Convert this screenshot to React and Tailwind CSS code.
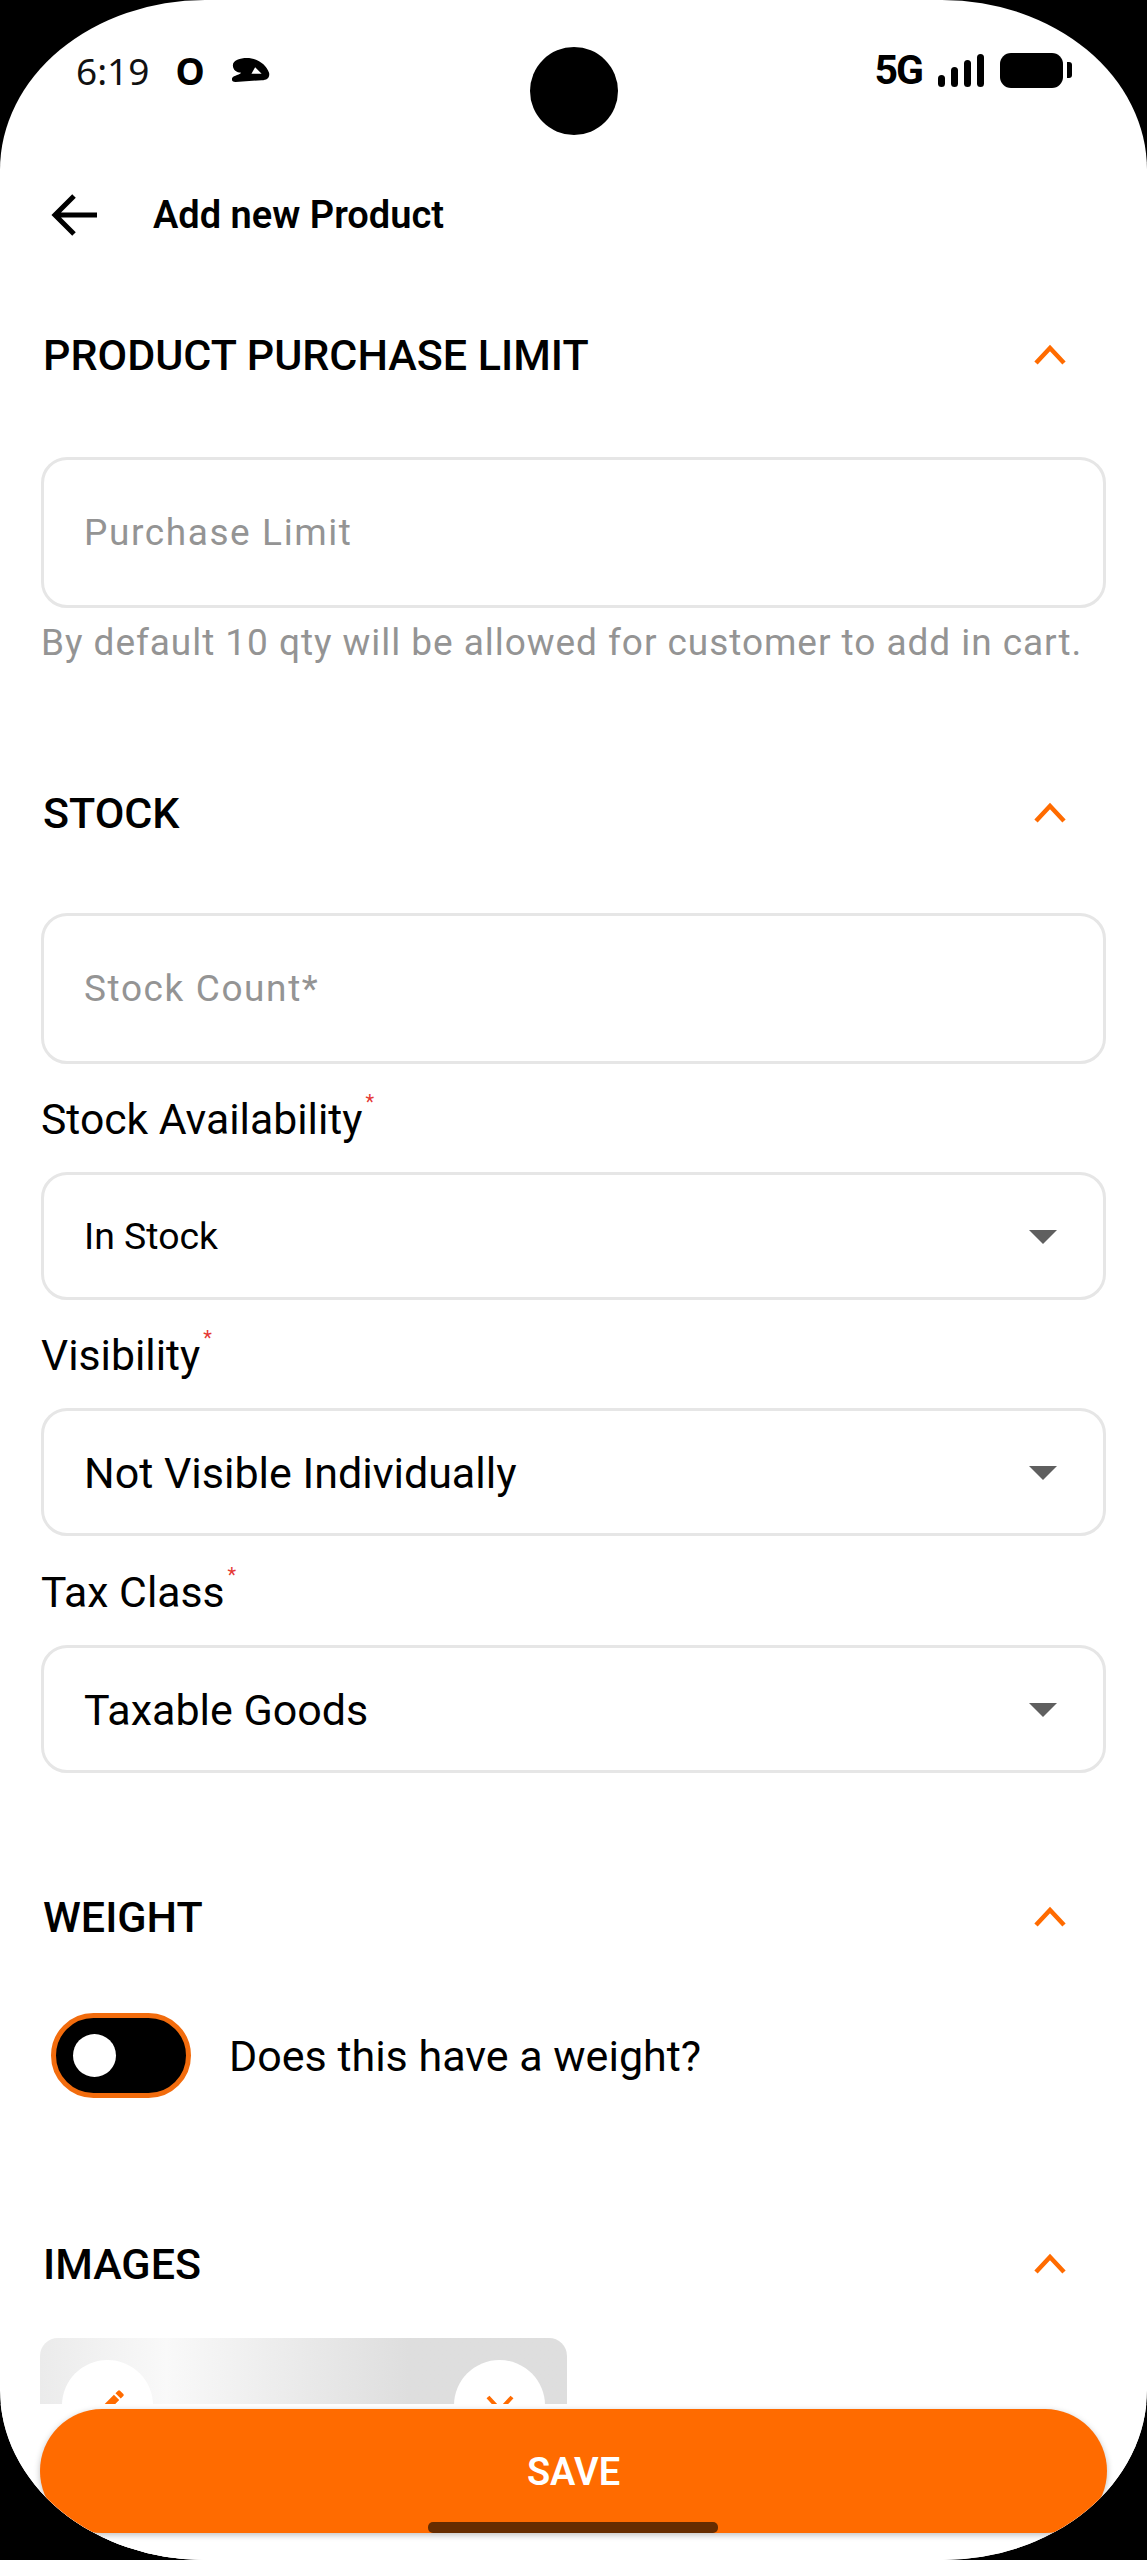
const ORANGE = "#ff6b00";

function ChevronUp() {
  return (
    <svg width="34" height="22" viewBox="0 0 34 22" fill="none" className="shrink-0">
      <path d="M3 19 L17 4 L31 19" stroke={ORANGE} strokeWidth="4.5" />
    </svg>
  );
}

function SectionHeading({ title, className = "" }) {
  return (
    <div className={`flex h-[68px] items-center justify-between pl-[2px] pr-[39px] ${className}`}>
      <h2 className="text-[43px] font-medium leading-none text-black">{title}</h2>
      <ChevronUp />
    </div>
  );
}

function TextInput({ placeholder }) {
  return (
    <div className="flex h-[151px] items-center rounded-[26px] border-[3px] border-[#e6e6e6] px-[40px] text-[37px] tracking-[1.6px] text-[#949494]">
      {placeholder}
    </div>
  );
}

function SelectField({ label, value, small, className = "mt-[30px]" }) {
  return (
    <div className={className}>
      <div className="flex h-[50px] items-center text-[42.7px] leading-none text-black">
        <span>{label}</span>
        <span className="mb-[34px] ml-[3px] text-[20px] leading-none text-[#e53935]">*</span>
      </div>
      <div className="mt-[28px] flex h-[128px] items-center justify-between rounded-[26px] border-[3px] border-[#e6e6e6] pl-[40px] pr-[46px]">
        <span className={small ? "text-[37.4px] text-black" : "pt-[3px] text-[43px] text-black"}>{value}</span>
        <span className="mt-[2px] h-0 w-0 border-x-[14px] border-t-[14px] border-x-transparent border-t-[#5f5f5f]" />
      </div>
    </div>
  );
}

function StatusBar() {
  return (
    <div className="flex h-[140px] items-center justify-between pl-[76px] pr-[75px]">
      <div className="flex items-center">
        <span className="text-[37px] leading-none text-[#111111] font-['Noto_Sans',sans-serif]">6:19</span>
        <span className="ml-[26px] text-[37px] font-bold leading-none text-black font-['Noto_Sans',sans-serif]">O</span>
        <svg width="41" height="26" viewBox="0 0 42 28" className="ml-[25px]">
          <path
            fill="#000"
            fillRule="evenodd"
            d="M1 24 C1 20 8 20 11 17 C6 17 2 14 2 9 C2 3 10 1 17 1 C28 1 38 8 41 17 C42 22 39 25 33 25 L5 27 C2 27 1 26 1 24 Z M22 18 L33 18 L26 11 Z"
          />
        </svg>
      </div>
      <div className="flex items-center">
        <span className="text-[41px] font-bold leading-none tracking-[-2px] text-black font-['Roboto',sans-serif]">5G</span>
        <svg width="46" height="33" viewBox="0 0 46 33" className="ml-[16px]">
          <rect x="0" y="21" width="7" height="12" rx="3.5" />
          <rect x="13" y="13" width="7" height="20" rx="3.5" />
          <rect x="26" y="6" width="7" height="27" rx="3.5" />
          <rect x="39" y="0" width="7" height="33" rx="3.5" />
        </svg>
        <div className="ml-[16px] h-[35px] w-[63px] rounded-[11px] bg-black" />
        <div className="ml-[4px] h-[16px] w-[5px] rounded-r-[3px] bg-black" />
      </div>
    </div>
  );
}

function ImageCard() {
  return (
    <div className="-ml-px mt-[40px] flex h-[300px] w-[527px] items-start justify-between rounded-t-[18px] bg-linear-to-r from-[#ebebeb] via-[#f9f9f9] via-24% to-[#dedede] to-70% px-[22px] pt-[22px]">
      <div className="flex h-[91px] w-[91px] items-center justify-center rounded-full bg-white">
        <svg width="34" height="34" viewBox="0 0 24 24" className="mb-[6px] ml-[6px]">
          <path
            fill={ORANGE}
            d="M3 17.25V21h3.75L17.81 9.94l-3.75-3.75L3 17.25zM20.71 7.04a1 1 0 0 0 0-1.41l-2.34-2.34a1 1 0 0 0-1.41 0l-1.83 1.83 3.75 3.75 1.83-1.83z"
          />
        </svg>
      </div>
      <div className="flex h-[91px] w-[91px] items-center justify-center rounded-full bg-white">
        <svg width="30" height="20" viewBox="0 0 30 20" fill="none" className="mb-[4px]">
          <path d="M3 3 L15 16 L27 3" stroke={ORANGE} strokeWidth="4" />
        </svg>
      </div>
    </div>
  );
}

export default function App() {
  return (
    <div className="h-[2560px] w-[1147px] bg-black">
      <div className="relative h-[2560px] overflow-hidden rounded-[205px/170px] bg-white font-['Roboto',sans-serif]">
        <StatusBar />
        <div className="absolute left-[530px] top-[47px] h-[88px] w-[88px] rounded-full bg-black" />

        <div className="flex h-[148px] items-center pl-[51px] pt-[2px]">
          <svg width="48" height="44" viewBox="0 0 48 44" fill="none">
            <path d="M46 22 H4 M23 3 L4 22 L23 41" stroke="#000" strokeWidth="5" />
          </svg>
          <h1 className="ml-[54px] text-[38px] font-semibold leading-none text-black">Add new Product</h1>
        </div>

        <div className="px-[41px]">
          <SectionHeading title="PRODUCT PURCHASE LIMIT" className="mt-[33px]" />
          <div className="mt-[68px]">
            <TextInput placeholder="Purchase Limit" />
          </div>
          <p className="mt-[13px] h-[44px] text-[37px] leading-[44px] tracking-[0.95px] text-[#949494]">
            By default 10 qty will be allowed for customer to add in cart.
          </p>

          <SectionHeading title="STOCK" className="mt-[114px]" />
          <div className="mt-[66px]">
            <TextInput placeholder="Stock Count*" />
          </div>
          <SelectField label="Stock Availability" value="In Stock" small />
          <SelectField label="Visibility" value="Not Visible Individually" />
          <SelectField label="Tax Class" value="Taxable Goods" className="mt-[31px]" />

          <SectionHeading title="WEIGHT" className="mt-[110px]" />
          <div className="mt-[62px] flex h-[85px] items-center pl-[10px]">
            <div className="flex h-[85px] w-[140px] items-center rounded-full border-[5px] border-[#f26c0d] bg-black pl-[17px]">
              <div className="h-[43px] w-[43px] rounded-full bg-white" />
            </div>
            <span className="ml-[38px] pt-[2px] text-[43px] leading-none text-black">Does this have a weight?</span>
          </div>

          <SectionHeading title="IMAGES" className="mt-[132px]" />
          <ImageCard />
        </div>

        {/* save bar sits over the scrolling form */}
        <div className="absolute inset-x-0 bottom-0 h-[156px] bg-white">
          <div className="relative mx-[40px] mt-[5px] flex h-[124px] items-center justify-center rounded-full bg-[#ff6b00] shadow-[0_2px_6px_rgba(0,0,0,0.25)]">
            <span className="pt-[2px] text-[38px] font-semibold text-white">SAVE</span>
            <div className="absolute bottom-0 left-[388px] h-[11px] w-[290px] rounded-[5px] bg-[#662c00]" />
          </div>
        </div>
      </div>
    </div>
  );
}
